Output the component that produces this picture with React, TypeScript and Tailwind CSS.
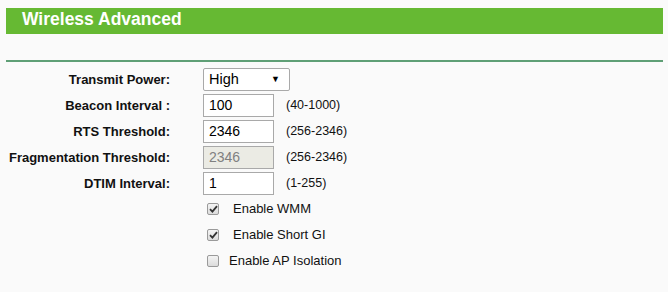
import { ReactNode } from 'react'

const rows = [
  { label: 'Beacon Interval :', value: '100', hint: '(40-1000)' },
  { label: 'RTS Threshold:', value: '2346', hint: '(256-2346)' },
  { label: 'Fragmentation Threshold:', value: '2346', hint: '(256-2346)', disabled: true },
  { label: 'DTIM Interval:', value: '1', hint: '(1-255)' },
]

const checks = [
  { label: 'Enable WMM', checked: true, gap: 'ml-[14px]' },
  { label: 'Enable Short GI', checked: true, gap: 'ml-[14px]' },
  { label: 'Enable AP Isolation', checked: false, gap: 'ml-[10px]' },
]

function Row({ label, children }: { label: string; children: ReactNode }) {
  return (
    <div className="flex items-center h-[23px]">
      <div className="w-[170px] shrink-0 text-right text-[13px] font-bold text-[#111]">{label}</div>
      <div className="ml-[33px] flex items-center">{children}</div>
    </div>
  )
}

function Checkbox({ checked }: { checked: boolean }) {
  return (
    <div className="w-[12px] h-[12px] rounded-[2px] border border-[#9a9a9a] bg-gradient-to-b from-[#f4f4f4] to-[#dcdcdc] flex items-center justify-center">
      {checked && (
        <svg width="9" height="8" viewBox="0 0 9 8">
          <path d="M1 4.2 L3.4 6.6 L8 1.2" fill="none" stroke="#333" strokeWidth="1.8" />
        </svg>
      )}
    </div>
  )
}

export default function App() {
  return (
    <div
      className="w-[668px] h-[292px] bg-[#fafafa] overflow-hidden"
      style={{ fontFamily: '"Liberation Sans", Arial, sans-serif' }}
    >
      {/* Title bar */}
      <div className="pt-[8px] pl-[6px] pr-[5px]">
        <div className="h-[26px] bg-[#66b933] pl-[16px] flex items-center">
          <span className="text-white font-bold text-[17.5px] leading-none -mt-[3px]">Wireless Advanced</span>
        </div>
      </div>

      <div className="mt-[26px] ml-[6px] mr-[5px] h-[2px] bg-[#5f9f76]" />

      <div className="pt-[6px] flex flex-col gap-[3px]">
        <Row label="Transmit Power:">
          <div className="w-[87px] h-[23px] bg-white border border-[#a9a9a9] rounded-[2px] flex items-center justify-between pl-[5px] pr-[9px]">
            <span className="text-[14.5px] text-black">High</span>
            <span className="text-[9px] text-black">▼</span>
          </div>
        </Row>
        {rows.map((r) => (
          <Row key={r.label} label={r.label}>
            <div
              className={`w-[71px] h-[23px] border border-[#a9a9a9] flex items-center pl-[5px] text-[14px] ${
                r.disabled ? 'bg-[#ebebe4] text-[#808080]' : 'bg-white text-black'
              }`}
            >
              {r.value}
            </div>
            <span className="ml-[12px] text-[12.5px] text-[#111]">{r.hint}</span>
          </Row>
        ))}
      </div>

      <div className="mt-[1px] pl-[207px] flex flex-col">
        {checks.map((c) => (
          <div key={c.label} className="h-[26px] flex items-center">
            <Checkbox checked={c.checked} />
            <span className={`${c.gap} text-[13px] text-[#111]`}>{c.label}</span>
          </div>
        ))}
      </div>
    </div>
  )
}
